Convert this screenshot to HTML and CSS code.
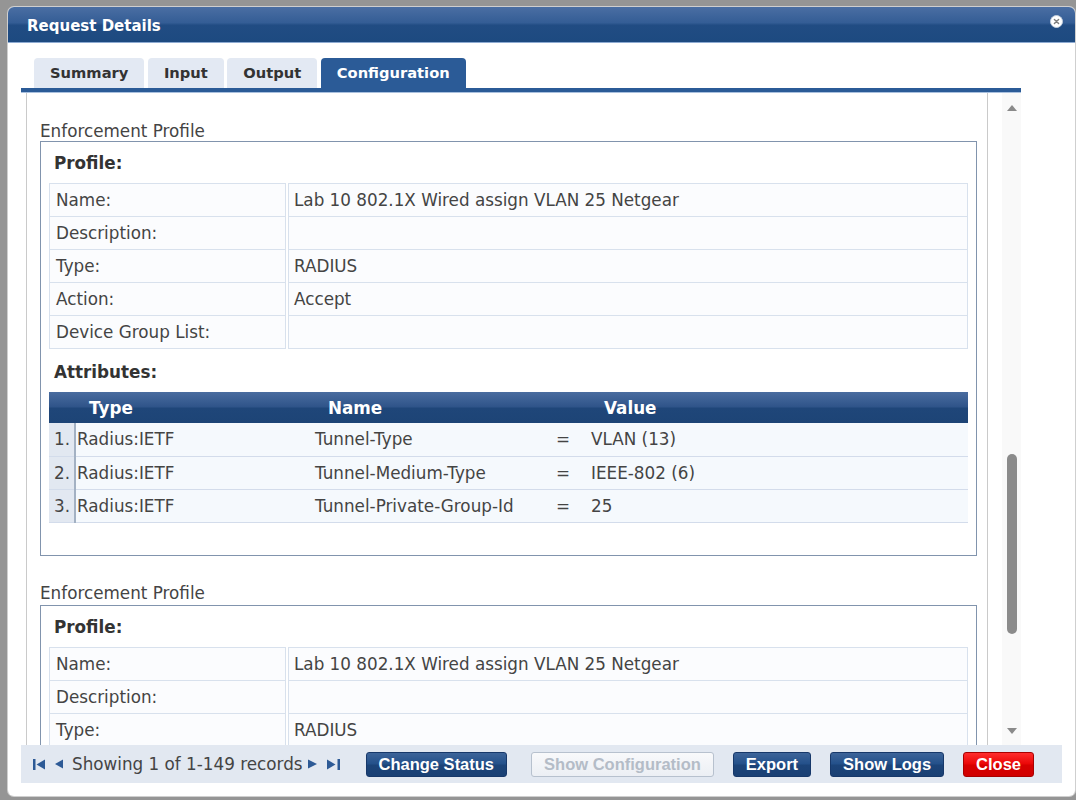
FILE: index.html
```html
<!DOCTYPE html>
<html lang="en">
<head>
    <meta charset="UTF-8">
    <meta name="viewport" content="width=device-width, initial-scale=1.0">
    <title>Request Details</title>
    <link rel="stylesheet" href="styles.css">
</head>
<body>
    <div class="dialog">
        <div class="dialog-title">
            <span class="title-text">Request Details</span>
            <span class="title-close">
                <svg width="13" height="13" viewBox="0 0 13 13">
                    <circle cx="6.5" cy="6.5" r="6" fill="#fff" stroke="#c4cfdd" stroke-width="1"/>
                    <path d="M4.4 4.4 L8.6 8.6 M8.6 4.4 L4.4 8.6" stroke="#7d7d7d" stroke-width="1.4" stroke-linecap="round"/>
                </svg>
            </span>
        </div>

        <div class="dialog-body">
            <ul class="tabs">
                <li>Summary</li>
                <li>Input</li>
                <li>Output</li>
                <li class="active">Configuration</li>
            </ul>

            <div class="panel">
                <div class="panel-scroll">
                    <div class="section-label">Enforcement Profile</div>
                    <div class="profile-box">
                        <div class="box-heading">Profile:</div>
                        <table class="info-table">
                            <tr><td class="label">Name:</td><td>Lab 10 802.1X Wired assign VLAN 25 Netgear</td></tr>
                            <tr><td class="label">Description:</td><td></td></tr>
                            <tr><td class="label">Type:</td><td>RADIUS</td></tr>
                            <tr><td class="label">Action:</td><td>Accept</td></tr>
                            <tr><td class="label">Device Group List:</td><td></td></tr>
                        </table>

                        <div class="box-heading attr-heading">Attributes:</div>
                        <table class="attr-table">
                            <colgroup>
                                <col class="col-num">
                                <col class="col-type">
                                <col class="col-name">
                                <col class="col-op">
                                <col>
                            </colgroup>
                            <thead>
                                <tr>
                                    <th></th>
                                    <th class="th-type">Type</th>
                                    <th class="th-name">Name</th>
                                    <th></th>
                                    <th class="th-value">Value</th>
                                </tr>
                            </thead>
                            <tbody>
                                <tr>
                                    <td class="num">1.</td>
                                    <td class="type">Radius:IETF</td>
                                    <td class="name">Tunnel-Type</td>
                                    <td class="op">=</td>
                                    <td class="value">VLAN (13)</td>
                                </tr>
                                <tr>
                                    <td class="num">2.</td>
                                    <td class="type">Radius:IETF</td>
                                    <td class="name">Tunnel-Medium-Type</td>
                                    <td class="op">=</td>
                                    <td class="value">IEEE-802 (6)</td>
                                </tr>
                                <tr>
                                    <td class="num">3.</td>
                                    <td class="type">Radius:IETF</td>
                                    <td class="name">Tunnel-Private-Group-Id</td>
                                    <td class="op">=</td>
                                    <td class="value">25</td>
                                </tr>
                            </tbody>
                        </table>
                    </div>

                    <div class="section-label second">Enforcement Profile</div>
                    <div class="profile-box">
                        <div class="box-heading">Profile:</div>
                        <table class="info-table">
                            <tr><td class="label">Name:</td><td>Lab 10 802.1X Wired assign VLAN 25 Netgear</td></tr>
                            <tr><td class="label">Description:</td><td></td></tr>
                            <tr><td class="label">Type:</td><td>RADIUS</td></tr>
                            <tr><td class="label">Action:</td><td>Accept</td></tr>
                            <tr><td class="label">Device Group List:</td><td></td></tr>
                        </table>
                    </div>
                </div>

                <div class="scrollbar">
                    <div class="scroll-track">
                        <span class="arrow-up"></span>
                        <span class="thumb"></span>
                        <span class="arrow-down"></span>
                    </div>
                </div>
            </div>

            <div class="footer">
                <div class="pager">
                    <svg class="pg-first" width="12" height="11" viewBox="0 0 12 11">
                        <rect x="0" y="0" width="2.5" height="11" fill="#2d5a96"/>
                        <polygon points="12,0.5 3.5,5.5 12,10.5" fill="#2d5a96"/>
                    </svg>
                    <svg class="pg-prev" width="8" height="10" viewBox="0 0 8 10">
                        <polygon points="8,0.5 0,5 8,9.5" fill="#2d5a96"/>
                    </svg>
                    <span class="pager-text">Showing 1 of 1-149 records</span>
                    <svg class="pg-next" width="9" height="10" viewBox="0 0 9 10">
                        <polygon points="0,0.5 9,5 0,9.5" fill="#2d5a96"/>
                    </svg>
                    <svg class="pg-last" width="13" height="11" viewBox="0 0 13 11">
                        <polygon points="0,0.5 8.5,5.5 0,10.5" fill="#2d5a96"/>
                        <rect x="10.5" y="0" width="2.5" height="11" fill="#2d5a96"/>
                    </svg>
                </div>
                <div class="actions">
                    <button class="btn first-btn">Change Status</button>
                    <button class="btn disabled">Show Configuration</button>
                    <button class="btn">Export</button>
                    <button class="btn">Show Logs</button>
                    <button class="btn danger">Close</button>
                </div>
            </div>
        </div>
    </div>
</body>
</html>
```

FILE: styles.css
```css
* {
    margin: 0;
    padding: 0;
    box-sizing: border-box;
}

body {
    background: #959595;
    font-family: 'DejaVu Sans', Verdana, sans-serif;
    color: #444;
    padding: 7px 1px 0 8px;
    height: 800px;
    overflow: hidden;
}

.dialog {
    width: 1067px;
    height: 789px;
    background: #fff;
    border-radius: 6px;
    overflow: hidden;
    display: flex;
    flex-direction: column;
    box-shadow: 0 0 0 1px #cfcfcf;
}

/* title bar */
.dialog-title {
    height: 36px;
    padding: 0 12px 0 19px;
    display: flex;
    justify-content: space-between;
    align-items: flex-start;
    background: linear-gradient(#4a6ea3, #345d95 45%, #214c83 52%, #1d4a80);
    border-bottom: 1px solid #8eabd2;
}

.title-text {
    color: #fff;
    font-weight: bold;
    font-size: 15px;
    line-height: 35px;
    padding-top: 2px;
}

.title-close {
    margin-top: 8px;
    display: flex;
}

.dialog-body {
    flex: 1;
    padding: 15px 13px 0 13px;
    display: flex;
    flex-direction: column;
}

/* tabs */
.tabs {
    list-style: none;
    display: flex;
    gap: 3.5px;
    width: 1000px;
    padding-left: 13px;
    border-bottom: 4px solid #2b5b97;
    box-shadow: 0 1px 0 #a9c0de;
}

.tabs li {
    height: 30px;
    line-height: 30px;
    padding: 0 16px;
    background: #e3e9f3;
    color: #333;
    font-weight: bold;
    font-size: 14.7px;
    border-radius: 4px 4px 0 0;
}

.tabs li.active {
    background: #2b5b97;
    color: #fff;
}

/* content panel */
.panel {
    display: flex;
    width: 1000px;
    height: 652px;
    margin-top: 1px;
    padding-left: 5px;
}

.panel-scroll {
    flex: 1;
    overflow: hidden;
    border-left: 1px solid #cacaca;
    border-right: 1px solid #cacaca;
    padding: 28px 10px 0 13px;
}

.section-label {
    font-size: 16.8px;
    line-height: 20px;
    color: #444;
}

.section-label.second {
    margin-top: 27px;
    margin-bottom: 2px;
}

.profile-box {
    border: 1px solid #8194ad;
    padding: 0 8px 32px 8px;
}

.box-heading {
    font-size: 16.8px;
    font-weight: bold;
    line-height: 20px;
    color: #333;
    padding: 11px 0 0 5px;
}

.box-heading.attr-heading {
    padding-top: 13px;
}

.info-table {
    width: calc(100% + 4px);
    margin: 10px -2px 0 -2px;
    border-collapse: separate;
    border-spacing: 2px 0;
    font-size: 16.8px;
}

.info-table td {
    height: 33px;
    border: 1px solid #d8e1ed;
    border-bottom: none;
    background: #fbfcfe;
    padding: 0 5px;
    color: #444;
    white-space: nowrap;
}

.info-table tr:last-child td {
    height: 34px;
    border-bottom: 1px solid #d8e1ed;
}

.info-table td.label {
    width: 237px;
    padding-left: 6px;
}

/* attributes grid */
.attr-table {
    width: 100%;
    margin-top: 10px;
    border-collapse: collapse;
    font-size: 16.8px;
    table-layout: fixed;
}

.col-num { width: 26px; }
.col-type { width: 235px; }
.col-name { width: 240px; }
.col-op { width: 35px; }

.attr-table th {
    height: 31px;
    text-align: left;
    color: #fff;
    font-weight: bold;
    background: linear-gradient(#4a6c9f, #2f5489 48%, #1f4679 52%, #1d4476);
    padding: 0;
}

.attr-table .th-type { padding-left: 14px; }
.attr-table .th-name { padding-left: 18px; }
.attr-table .th-value { padding-left: 19px; }

.attr-table td {
    height: 33px;
    background: #f5f9fd;
    border-bottom: 1px solid #d3dceb;
    color: #444;
    white-space: nowrap;
}

.attr-table td.num {
    background: #e2e8f1;
    border-right: 2px solid #a3b1c3;
    text-align: right;
    padding-right: 4px;
}

.attr-table td.type { padding-left: 1px; }
.attr-table td.name { padding-left: 5px; }
.attr-table td.op { padding-left: 6px; }
.attr-table td.value { padding-left: 6px; }

/* scrollbar */
.scrollbar {
    width: 33px;
    padding-left: 14px;
}

.scroll-track {
    width: 19px;
    height: 100%;
    background: #f9f9f9;
    display: flex;
    flex-direction: column;
    align-items: center;
    padding-top: 12px;
}

.arrow-up {
    width: 0;
    height: 0;
    border-left: 5px solid transparent;
    border-right: 5px solid transparent;
    border-bottom: 6px solid #8a8a8a;
}

.thumb {
    width: 10px;
    height: 180px;
    margin-top: 343px;
    border-radius: 5px;
    background: #8b8b8b;
}

.arrow-down {
    width: 0;
    height: 0;
    margin-top: 94px;
    border-left: 5px solid transparent;
    border-right: 5px solid transparent;
    border-top: 6px solid #8a8a8a;
}

/* footer */
.footer {
    height: 38px;
    background: #e2e8f1;
    display: flex;
    align-items: center;
    padding-left: 12px;
}

.pager {
    display: flex;
    align-items: center;
    flex-shrink: 0;
}

.pg-first { margin-right: 10px; }
.pg-prev { margin-right: 9px; }
.pg-next { margin-left: 5px; margin-right: 10px; }

.pager-text {
    font-size: 16.8px;
    line-height: 20px;
    color: #444;
    white-space: nowrap;
}

.actions {
    display: flex;
    gap: 19px;
    margin-left: 26px;
}

.btn {
    height: 25px;
    padding: 0 12px;
    border: 1px solid #17386a;
    border-radius: 3px;
    background: linear-gradient(#3d6499, #23508a 48%, #1c4479 52%, #1a4074);
    color: #fff;
    font-family: 'Liberation Sans', Arial, sans-serif;
    font-weight: bold;
    font-size: 16.5px;
    line-height: 23px;
    cursor: pointer;
}

.btn.first-btn {
    margin-right: 5px;
}

.btn.disabled {
    background: linear-gradient(#f8f9fb, #eceff4);
    border-color: #b7c1ce;
    color: #b4bcc7;
    cursor: default;
}

.btn.danger {
    background: linear-gradient(#ff2d2d, #ea0606 48%, #d80000 52%, #d00000);
    border-color: #a90000;
}
```
